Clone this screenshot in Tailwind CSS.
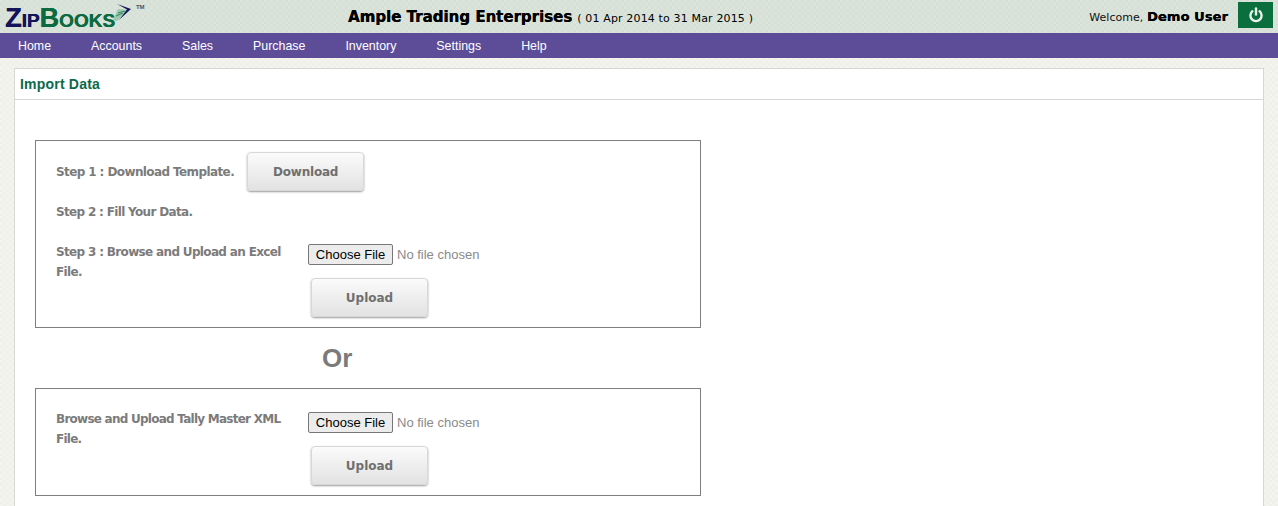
<!DOCTYPE html>
<html lang="en">
<head>
  <meta charset="UTF-8">
  <title>Import Data - ZipBooks</title>
  <script src="https://cdn.jsdelivr.net/npm/@tailwindcss/browser@4"></script>
</head>
<body class="bg-[#f1f2ec] bg-[image:repeating-conic-gradient(#eff0ea_0_25%,#f3f4ee_0_50%)] bg-[length:6px_6px] font-['Liberation_Sans',sans-serif] h-[506px] overflow-hidden">

  <!-- top bar -->
  <header class="h-[33px] bg-[#d9e2d8] bg-[image:repeating-conic-gradient(#d7e0d6_0_25%,#dbe4da_0_50%)] bg-[length:6px_6px] flex items-start">
    <div class="w-[348px] pl-[5px] pt-[6px] flex items-start [text-shadow:0.4px_0_0_currentColor]">
      <span class="font-bold leading-[24px] text-[#14145a]"><span class="text-[27px]">Z</span><span class="text-[19px]">IP</span></span>
      <span class="font-bold leading-[24px] text-[#0b6a3f]"><span class="text-[27px]">B</span><span class="text-[19px]">OOKS</span></span>
      <svg class="-ml-[3px] -mt-[3px]" width="20" height="20" viewBox="0 0 20 20" fill="none">
        <path d="M1 17 L6 6 L16 7 L5 18 Z" fill="#9cc8ae"/>
        <path d="M6 10 L13 8 M4 13 L11 10" stroke="#2f8a5c" stroke-width="1"/>
        <path d="M5 1 L19 6 L7 17 L15 6.5 Z" fill="#14145a"/>
      </svg>
      <span class="text-[6px] font-bold text-[#555] ml-[4px] -mt-[3px] leading-[8px] [text-shadow:none]">TM</span>
    </div>
    <div class="pt-[5px] font-['DejaVu_Sans',sans-serif] text-black whitespace-nowrap">
      <span class="text-[15px] font-bold [text-shadow:0.3px_0_0_#000]">Ample Trading Enterprises</span>
      <span class="text-[11px] tracking-[0.15px]">( 01 Apr 2014 to 31 Mar 2015 )</span>
    </div>
    <div class="ml-auto flex items-start pr-[5px] pt-[2px]">
      <span class="pt-[5px] text-[11px] tracking-[0.05px] text-[#111] font-['DejaVu_Sans',sans-serif] mr-[10px] whitespace-nowrap">Welcome, <b class="text-[13px] tracking-[0.1px] text-black [text-shadow:0.3px_0_0_#000]">Demo User</b></span>
      <button class="w-[35px] h-[26px] bg-[#0a6f3c] flex items-center justify-center">
        <svg width="16" height="16" viewBox="0 0 16 16" fill="none" stroke="#e8f3ea" stroke-width="2.4" stroke-linecap="round">
          <path d="M8 1.5V7.5"/>
          <path d="M4.4 4.2a5.6 5.6 0 1 0 7.2 0"/>
        </svg>
      </button>
    </div>
  </header>

  <!-- main menu -->
  <nav class="h-[25px] pt-[1px] bg-[#5d4d99] text-white text-[12.4px] flex items-center pl-[18px] gap-[40px]">
    <a>Home</a>
    <a>Accounts</a>
    <a>Sales</a>
    <a>Purchase</a>
    <a>Inventory</a>
    <a>Settings</a>
    <a>Help</a>
  </nav>

  <main class="mt-[10px] mx-[14px] bg-white border border-[#d6d8d3] w-[1250px]">
    <div class="h-[31px] border-b border-[#d6d8d3] pl-[5px] flex items-center">
      <h2 class="text-[14px] font-bold tracking-[0.2px] text-[#0b6a4a]">Import Data</h2>
    </div>

    <div class="pl-[20px] pt-[40px] pb-[20px] w-[686px] font-['DejaVu_Sans',sans-serif] text-[#7b7b7b]">
      <!-- Excel import -->
      <section class="h-[188px] w-[666px] border border-[#7f7f7f] px-[20px] pt-[11px]">
        <div class="flex items-center h-[39px] gap-[13px] text-[12px] font-bold">
          <span class="tracking-[-0.6px]">Step 1 : Download Template.</span>
          <button class="w-[117px] h-[39px] rounded-[4px] border border-[#d8d8d8] shadow-[0_1px_2px_#999] bg-gradient-to-b from-[#fbfbfb] to-[#e2e2e2] text-[#6f6f6f] text-[12px] tracking-[-0.2px] font-bold">Download</button>
        </div>
        <p class="mt-[11px] h-[20px] leading-[20px] text-[12px] tracking-[-0.67px] font-bold">Step 2 : Fill Your Data.</p>
        <div class="mt-[20px] flex">
          <p class="w-[252px] pr-[16px] leading-[20px] text-[12px] tracking-[-0.66px] font-bold">Step 3 : Browse and Upload an Excel File.</p>
          <div class="mt-[2px]">
            <div class="flex items-center h-[21px] font-['Liberation_Sans',sans-serif]">
              <span class="w-[85px] h-[21px] border border-[#777] rounded-[2px] bg-[#ececec] text-[13px] leading-[19px] text-center text-black">Choose File</span>
              <span class="ml-[4px] text-[13px] text-[#8a8a8a]">No file chosen</span>
            </div>
            <button class="ml-[3px] mt-[13px] w-[117px] h-[39px] rounded-[4px] border border-[#d8d8d8] shadow-[0_1px_2px_#999] bg-gradient-to-b from-[#fbfbfb] to-[#e2e2e2] text-[#6f6f6f] text-[12px] font-bold">Upload</button>
          </div>
        </div>
      </section>

      <p class="h-[60px] w-[666px] pl-[287px] font-['Liberation_Sans',sans-serif] text-[26px] font-bold leading-[61px]">Or</p>

      <!-- Tally import -->
      <section class="h-[108px] w-[666px] border border-[#7f7f7f] px-[20px] pt-[20px]">
        <div class="flex">
          <p class="w-[252px] pr-[16px] leading-[20px] text-[12px] tracking-[-0.75px] font-bold">Browse and Upload Tally Master XML File.</p>
          <div class="mt-[3px]">
            <div class="flex items-center h-[21px] font-['Liberation_Sans',sans-serif]">
              <span class="w-[85px] h-[21px] border border-[#777] rounded-[2px] bg-[#ececec] text-[13px] leading-[19px] text-center text-black">Choose File</span>
              <span class="ml-[4px] text-[13px] text-[#8a8a8a]">No file chosen</span>
            </div>
            <button class="ml-[3px] mt-[13px] w-[117px] h-[39px] rounded-[4px] border border-[#d8d8d8] shadow-[0_1px_2px_#999] bg-gradient-to-b from-[#fbfbfb] to-[#e2e2e2] text-[#6f6f6f] text-[12px] font-bold">Upload</button>
          </div>
        </div>
      </section>
    </div>
  </main>
</body>
</html>
